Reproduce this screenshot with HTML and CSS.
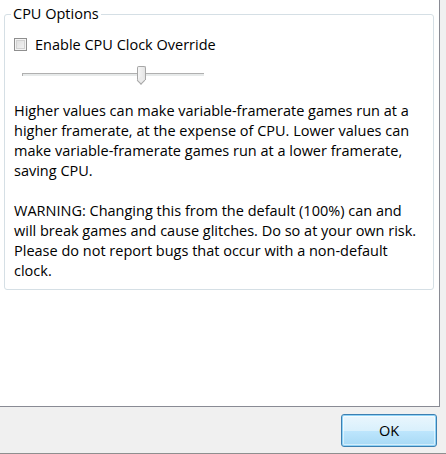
FILE: index.html
```html
<!DOCTYPE html>
<html lang="en">
<head>
    <meta charset="UTF-8">
    <title>CPU Options</title>
    <link rel="stylesheet" href="styles.css">
</head>
<body>
    <div class="window">
        <div class="page">
            <div class="group">
                <div class="group-title">CPU Options</div>

                <label class="check">
                    <span class="box"></span>
                    Enable CPU Clock Override
                </label>

                <div class="slider">
                    <div class="track"></div>
                    <div class="thumb"></div>
                </div>

                <p class="info">
                    Higher values can make variable-framerate games run at a higher framerate, at the expense of CPU. Lower values can make variable-framerate games run at a lower framerate, saving CPU.
                </p>
                <p class="info">
                    WARNING: Changing this from the default (100%) can and will break games and cause glitches. Do so at your own risk. Please do not report bugs that occur with a non-default clock.
                </p>
            </div>
        </div>

        <div class="buttons">
            <button class="btn">OK</button>
        </div>
    </div>
</body>
</html>
```

FILE: styles.css
```css
body {
    margin: 0;
    padding: 0;
    font-family: 'Open Sans', 'Noto Sans', sans-serif;
    font-size: 14.5px;
    color: #000;
    background: #f0f0f0;
}

.window {
    width: 446px;
    height: 454px;
    display: flex;
    flex-direction: column;
    border-bottom: 1px solid #8e8f8f;
    box-sizing: border-box;
}

.page {
    width: 440px;
    height: 407px;
    background: #fff;
    border-right: 1px solid #898b94;
    border-bottom: 1px solid #898b94;
    box-sizing: border-box;
    padding: 14px 0 0 4px;
}

.group {
    position: relative;
    width: 430px;
    height: 276px;
    box-sizing: border-box;
    border: 1px solid #d5dfe5;
    border-radius: 3px;
    padding: 21px 9px 0 9px;
}

.group-title {
    position: absolute;
    top: -11px;
    left: 6px;
    padding: 0 2px 0 2px;
    background: #fff;
    line-height: 20px;
}

.check {
    display: flex;
    align-items: center;
    gap: 8px;
    height: 16px;
}

.box {
    width: 11px;
    height: 11px;
    border: 1px solid #8f8f8f;
    background: linear-gradient(135deg, #dcdcdc, #f6f6f6);
    box-shadow: inset 0 0 0 1px #f4f4f4, inset 0 0 0 2px #d2d2d2;
}

.slider {
    position: relative;
    margin: 14px 0 0 8px;
    width: 182px;
    height: 20px;
}

.track {
    position: absolute;
    top: 7px;
    left: 0;
    width: 182px;
    height: 3px;
    background: #e7eaea;
    border-top: 1px solid #b0b0b0;
    border-left: 1px solid #b0b0b0;
    box-sizing: border-box;
}

.thumb {
    position: absolute;
    top: 0;
    left: 115px;
    width: 9px;
    height: 18px;
}

.thumb::before {
    content: '';
    position: absolute;
    left: 0;
    top: 0;
    width: 7px;
    height: 13px;
    border: 1px solid #a7a7a7;
    border-bottom: none;
    border-radius: 2px 2px 0 0;
    background: linear-gradient(to right, #f6f6f6, #e4e4e4);
}

.thumb::after {
    content: '';
    position: absolute;
    left: 1px;
    top: 10px;
    width: 5px;
    height: 5px;
    border-right: 1px solid #a7a7a7;
    border-bottom: 1px solid #a7a7a7;
    background: #ebebeb;
    transform: rotate(45deg) translate(1px, 1px);
}

.info {
    margin: 15px 0 0 0;
    width: 410px;
    line-height: 20px;
}

.info + .info {
    margin-top: 20px;
}

.buttons {
    flex: 1;
    display: flex;
    justify-content: flex-end;
    align-items: flex-start;
    padding: 7px 9px 0 0;
}

.btn {
    width: 96px;
    height: 33px;
    font-family: 'Open Sans', 'Noto Sans', sans-serif;
    font-size: 14.5px;
    color: #000;
    border: 1px solid #3c7fb1;
    border-radius: 3px;
    background: linear-gradient(#eaf6fd 0%, #d9f0fc 50%, #bee6fd 50%, #a7d9f5 100%);
    box-shadow: inset 0 0 0 1px #8fd3f7, inset 0 0 0 2px rgba(255, 255, 255, 0.5);
}
```
